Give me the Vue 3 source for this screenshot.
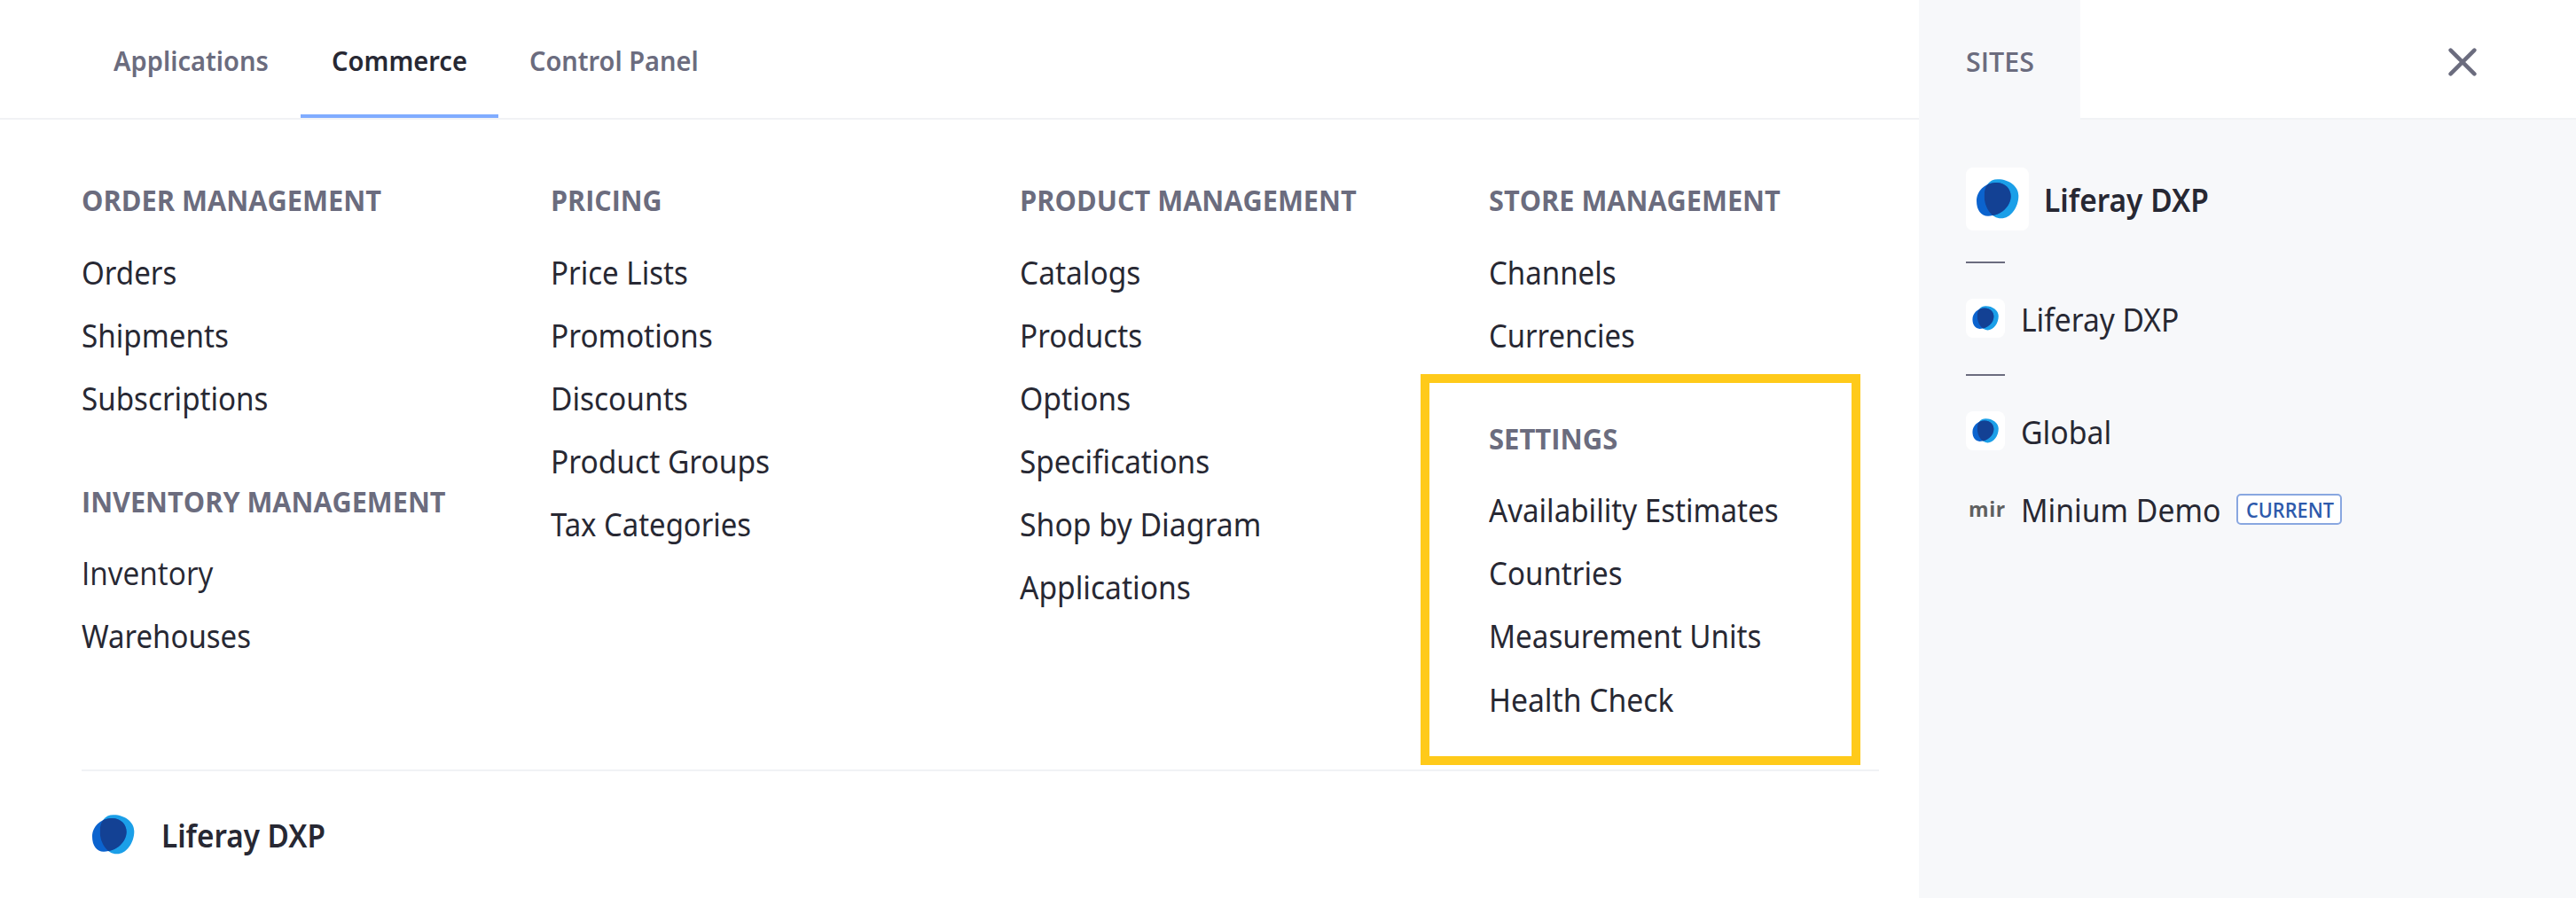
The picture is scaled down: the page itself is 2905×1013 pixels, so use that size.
<script setup>
import { h } from 'vue'

// k is the horizontal condensing applied to each label
const tabs = [
  { label: 'Applications', k: 0.926, width: 247, pad: 36 },
  { label: 'Commerce', k: 0.926, width: 223, pad: 34.5, active: true },
  { label: 'Control Panel', k: 0.923, width: 260, pad: 35 },
]

const columns = [
  [
    {
      title: 'Order Management', k: 0.98,
      items: [['Orders', 0.93], ['Shipments', 0.933], ['Subscriptions', 0.932]],
    },
    {
      title: 'Inventory Management', k: 0.976,
      items: [['Inventory', 0.94, true], ['Warehouses', 0.927]],
    },
  ],
  [
    {
      title: 'Pricing', k: 0.97,
      items: [['Price Lists', 0.93], ['Promotions', 0.94], ['Discounts', 0.94], ['Product Groups', 0.942], ['Tax Categories', 0.924]],
    },
  ],
  [
    {
      title: 'Product Management', k: 0.978,
      items: [['Catalogs', 0.941], ['Products', 0.935], ['Options', 0.947], ['Specifications', 0.936], ['Shop by Diagram', 0.949], ['Applications', 0.943]],
    },
  ],
  [
    {
      title: 'Store Management', k: 0.977,
      items: [['Channels', 0.928], ['Currencies', 0.923]],
    },
    {
      title: 'Settings', k: 0.987, highlight: true,
      items: [['Availability Estimates', 0.931], ['Countries', 0.93], ['Measurement Units', 0.932], ['Health Check', 0.946]],
    },
  ],
]

const squeeze = (k) => ({ transform: `scaleX(${k})` })

const BACK = 'M128 67C165 66 199 90 199 122C199 162 172 199 140 199C108 199 83 162 83 122C83 90 100 67 128 67Z'
const FRONT = 'M120 78C152 76 173 98 173 124C173 158 140 191 96 191C72 191 57 170 57 140C57 108 84 80 120 78Z'

const Logo = () =>
  h('svg', { viewBox: '21 27 213 213', width: '100%', height: '100%', style: 'display:block' }, [
    h('clipPath', { id: 'logo-back' }, [h('path', { d: BACK })]),
    h('path', { d: BACK, fill: '#1b9fe8' }),
    h('path', { d: FRONT, fill: '#0b63ce' }),
    h('path', { d: FRONT, fill: '#134194', 'clip-path': 'url(#logo-back)' }),
  ])
</script>

<template>
  <div class="menu">
    <main class="main">
      <nav class="tabs">
        <a
          v-for="tab in tabs"
          :key="tab.label"
          class="tab"
          :class="{ active: tab.active }"
          :style="{ width: tab.width + 'px', paddingLeft: tab.pad + 'px' }"
        ><span class="text" :style="squeeze(tab.k)">{{ tab.label }}</span></a>
      </nav>
      <div class="body">
        <div class="columns">
          <div v-for="(column, i) in columns" :key="i" class="column">
            <section v-for="group in column" :key="group.title" class="group">
              <h2 class="title"><span class="text" :style="squeeze(group.k)">{{ group.title }}</span></h2>
              <ul class="list">
                <li v-for="[label, k, plain] in group.items" :key="label" :class="{ plain }">
                  <span class="text" :style="squeeze(k)">{{ label }}</span>
                </li>
              </ul>
              <div v-if="group.highlight" class="highlight"></div>
            </section>
          </div>
        </div>
        <footer class="footer">
          <div class="footer-logo"><Logo /></div>
          <strong class="brand"><span class="text" :style="squeeze(0.936)">Liferay DXP</span></strong>
        </footer>
      </div>
    </main>

    <aside class="side">
      <header class="side-head">
        <div class="sites"><span class="text" :style="squeeze(0.969)">SITES</span></div>
        <div class="bar">
          <svg class="close" viewBox="0 0 32 32" width="32" height="32">
            <path d="M2.6 2.6L29.4 29.4M29.4 2.6L2.6 29.4" fill="none" stroke="#6b6c7e" stroke-width="4.5" stroke-linecap="round" />
          </svg>
        </div>
      </header>
      <div class="side-body">
        <div class="row big">
          <div class="tile"><Logo /></div>
          <strong class="brand"><span class="text" :style="squeeze(0.94)">Liferay DXP</span></strong>
        </div>
        <div class="rule first"></div>
        <div class="row">
          <div class="tile"><Logo /></div>
          <span class="name"><span class="text" :style="squeeze(0.943)">Liferay DXP</span></span>
        </div>
        <div class="rule"></div>
        <div class="row">
          <div class="tile"><Logo /></div>
          <span class="name"><span class="text" :style="squeeze(0.95)">Global</span></span>
        </div>
        <div class="row last">
          <div class="tile word"><span>mir</span></div>
          <span class="name demo"><span class="text" :style="squeeze(0.947)">Minium Demo</span></span>
          <span class="badge"><span class="text" :style="squeeze(0.943)">CURRENT</span></span>
        </div>
      </div>
    </aside>
  </div>
</template>

<style>
body {
  margin: 0;
}
</style>

<style scoped>
.menu {
  display: flex;
  width: 2905px;
  height: 1013px;
  overflow: hidden;
  background: #fff;
  color: #272833;
  font-family: "Noto Sans", "Open Sans", sans-serif;
  font-size: 35.6px;
}
.text {
  display: inline-block;
  white-space: nowrap;
  transform-origin: 0 50%;
}
.main {
  width: 2164px;
  flex: none;
}
.tabs {
  display: flex;
  height: 133px;
  padding-left: 92px;
  border-bottom: 2px solid #f1f2f5;
}
.tab {
  box-sizing: border-box;
  height: 133px;
  line-height: 136px;
  font-size: 31.4px;
  font-weight: 600;
  color: #6b6c7e;
}
.tab.active {
  color: #272833;
  box-shadow: inset 0 -4px #80acff;
}
.body {
  padding: 63px 45px 0 92px;
}
.columns {
  display: grid;
  grid-template-columns: repeat(4, 529px);
  width: 2027px;
  height: 670px;
  border-bottom: 2px solid #f1f2f5;
}
.group {
  position: relative;
  margin-bottom: 53px;
}
.title {
  margin: 0 0 18.3px;
  line-height: 56px;
  height: 55px;
  font-family: "Open Sans", sans-serif;
  font-size: 31.4px;
  font-weight: 700;
  color: #6b6c7e;
  text-transform: uppercase;
}
.column {
  padding-top: 0.3px;
}
.list {
  margin: 0;
  padding: 0;
  list-style: none;
}
.list li {
  height: 71.15px;
  line-height: 71.15px;
}
.plain {
  font-family: "Open Sans", sans-serif;
}
.highlight {
  position: absolute;
  left: -77px;
  top: -45px;
  box-sizing: border-box;
  width: 496px;
  height: 441px;
  border: 10px solid #ffca1a;
}
.footer {
  display: flex;
  padding-top: 36px;
}
.footer-logo {
  width: 71px;
  height: 71px;
}
.brand {
  font-weight: 600;
  line-height: 73px;
}
.footer .brand {
  margin: 0 0 0 18.5px;
}
.side {
  flex: 1;
  background: #f7f8fa;
}
.side-head {
  display: flex;
  height: 135px;
}
.sites {
  box-sizing: border-box;
  width: 182px;
  padding-left: 53px;
  font-family: "Open Sans", sans-serif;
  font-size: 31.4px;
  font-weight: 600;
  line-height: 137px;
  color: #6b6c7e;
}
.bar {
  flex: 1;
  display: flex;
  justify-content: flex-end;
  background: #fff;
  border-bottom: 2px solid #f1f2f5;
}
.close {
  margin: 54px 112px 0 0;
}
.side-body {
  padding: 54px 0 0 53px;
}
.row {
  display: flex;
  height: 44px;
}
.row.big {
  height: 71px;
}
.tile {
  flex: none;
  width: 44px;
  height: 44px;
  border-radius: 8px;
  background: #fff;
  overflow: hidden;
}
.big .tile {
  width: 71px;
  height: 71px;
}
.big .brand {
  margin-left: 17px;
}
.name {
  margin-left: 17.5px;
  line-height: 47px;
}
.rule {
  width: 44px;
  height: 2px;
  margin: 41px 0 40px;
  background: #6b6c7e;
}
.rule.first {
  margin-top: 35px;
}
.last {
  margin-top: 44px;
}
.word {
  background: none;
  border-radius: 0;
  padding-left: 3px;
  box-sizing: border-box;
  font-family: "Open Sans", sans-serif;
  font-size: 23px;
  font-weight: 700;
  letter-spacing: 0.6px;
  line-height: 45px;
  color: #5f6060;
}
.demo {
  width: 243.5px;
}
.badge {
  box-sizing: border-box;
  width: 119px;
  height: 35px;
  margin-top: 5px;
  padding-left: 8.5px;
  border: 2px solid #89a7e0;
  border-radius: 5px;
  background: #fff;
  color: #2e5aac;
  font-family: "Open Sans", sans-serif;
  font-size: 23px;
  font-weight: 600;
  line-height: 32px;
}
</style>
